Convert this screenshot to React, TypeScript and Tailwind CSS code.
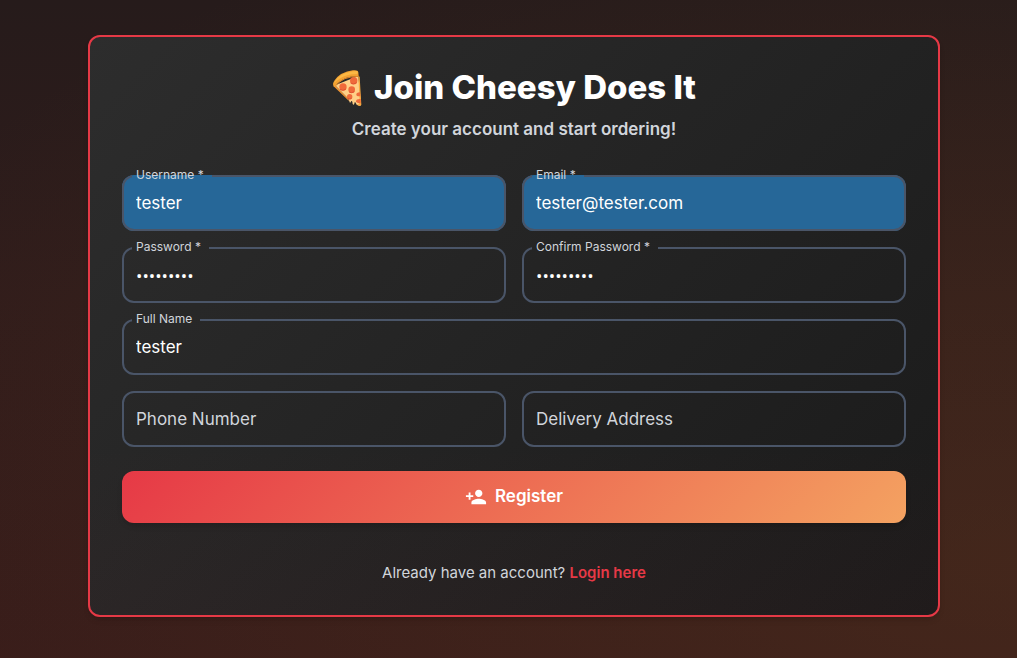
import { useState } from 'react'
import { MdPersonAdd } from 'react-icons/md'

type FieldProps = {
  id: string
  label: string
  type?: string
  initial?: string
  required?: boolean
  highlighted?: boolean
  className?: string
}

function PizzaSlice() {
  return (
    <svg viewBox="33 24 96 120" className="h-10 w-8 shrink-0" aria-hidden="true">
      <path
        d="M42 76 L112 48 Q116 90 120 132 Q120 138 115 137 L107 134 L103 127 Q100 126 100 131 Q98 137 95 132 L94 125 Q91 120 89 127 Q86 130 85 124 L82 116 Z"
        fill="#ffcf87"
      />
      <path d="M42 76 L82 116 L84 123 L37 78 Z" fill="#f19534" />
      <path d="M112 48 L116 50 L121 134 Q119 139 114 137 L107 134 Q116 134 116 125 Z" fill="#f7a93f" />
      <g fill="#ef6a3a">
        <circle cx="98" cy="62" r="11" />
        <circle cx="66" cy="81" r="11" />
        <circle cx="92" cy="89" r="10" />
        <circle cx="86" cy="110" r="8" />
        <path d="M117 97 Q105 97 106 105 Q108 111 118 108 Z" />
        <path d="M119 117 Q106 116 105 124 Q107 130 119 130 Z" />
      </g>
      <g fill="none" stroke="#d8452e" strokeWidth="2">
        <path d="M89 69 Q97 76 107 68" />
        <path d="M57 88 Q66 95 75 87" />
        <path d="M84 96 Q92 101 100 95" />
        <path d="M80 115 Q87 120 92 115" />
      </g>
      <path
        d="M38 79 Q33 72 41 61 Q58 36 96 31 Q111 29 112 37 L113 49 Q75 46 50 70 L43 79 Q40 82 38 79 Z"
        fill="#f2a132"
      />
      <path
        d="M39 71 Q45 54 63 44 Q84 33 109 33 Q112 38 109 42 Q79 42 59 54 Q47 61 39 71 Z"
        fill="#fbb844"
      />
      <path d="M45 77 Q65 49 113 49" fill="none" stroke="#d9842b" strokeWidth="3" />
    </svg>
  )
}

function Field({ id, label, type = 'text', initial = '', required, highlighted, className = '' }: FieldProps) {
  const [value, setValue] = useState(initial)
  const text = required ? `${label} *` : label
  const floating = value !== ''

  return (
    <div className={`relative h-14 ${className}`}>
      <input
        id={id}
        type={type}
        value={value}
        required={required}
        onChange={(e) => setValue(e.target.value)}
        className={`h-full w-full rounded-xl px-3.5 text-[17px] text-white outline-none ${
          highlighted ? 'bg-[#266798]' : 'bg-transparent'
        } ${type === 'password' ? "font-['Open_Sans',sans-serif]" : ''}`}
      />
      {/* the legend cuts the gap in the top border, so the box starts half a legend higher */}
      <fieldset
        aria-hidden="true"
        className={`pointer-events-none absolute inset-x-0 bottom-0 rounded-xl border-2 border-[#4a5568] px-2 ${
          floating ? '-top-1' : 'top-0'
        }`}
      >
        {floating && <legend className="invisible h-2.5 pr-2 pl-1 text-xs leading-[10px]">{text}</legend>}
      </fieldset>
      <label
        htmlFor={id}
        className={`pointer-events-none absolute left-3.5 text-[#d1d5db] ${
          floating ? '-top-2 text-xs leading-4' : 'top-4 text-[17px] leading-6'
        }`}
      >
        {text}
      </label>
    </div>
  )
}

export default function App() {
  return (
    <div className="flex min-h-screen items-center justify-center bg-[radial-gradient(ellipse_at_100%_85%,rgba(100,65,30,0.3),transparent_90%),linear-gradient(to_bottom,#261b1b,#301c1b_45%,#371b1a)] pb-1.5 pl-[11px] font-['Inter',sans-serif]">
      <main className="w-full max-w-[852px] rounded-xl border-2 border-[#e63946] bg-[linear-gradient(to_top,rgba(230,57,70,0.03),transparent_30%),linear-gradient(135deg,#2d2d2d,#1a1a1a)] p-8 shadow-md">
        <header className="flex flex-col items-center text-center">
          <h1 className="flex h-[38px] items-center gap-2.5 text-[33px] font-extrabold text-white">
            <PizzaSlice />
            Join Cheesy Does It
          </h1>
          <p className="mt-2.5 text-[17px] leading-6 font-semibold text-[#d1d5db]">
            Create your account and start ordering!
          </p>
        </header>

        <form onSubmit={(e) => e.preventDefault()} className="mt-[34px]">
          <div className="grid grid-cols-2 gap-4">
            <Field id="username" label="Username" initial="tester" required highlighted />
            <Field id="email" label="Email" type="email" initial="tester@tester.com" required highlighted />
            <Field id="password" label="Password" type="password" initial="tester123" required />
            <Field id="confirm" label="Confirm Password" type="password" initial="tester123" required />
            <Field id="fullName" label="Full Name" initial="tester" className="col-span-2" />
            <Field id="phone" label="Phone Number" type="tel" />
            <Field id="address" label="Delivery Address" />
          </div>
          <button
            type="submit"
            className="mt-6 flex h-[52px] w-full items-center justify-center gap-2 rounded-xl bg-[linear-gradient(135deg,#e63946,#f4a261)] text-[17px] font-semibold text-white shadow-md"
          >
            <MdPersonAdd size={22} />
            Register
          </button>
        </form>

        <p className="mt-10 text-center text-[15px] leading-5 text-[#d1d5db]">
          Already have an account?{' '}
          <a href="#login" className="font-semibold text-[#e63946]">
            Login here
          </a>
        </p>
      </main>
    </div>
  )
}
